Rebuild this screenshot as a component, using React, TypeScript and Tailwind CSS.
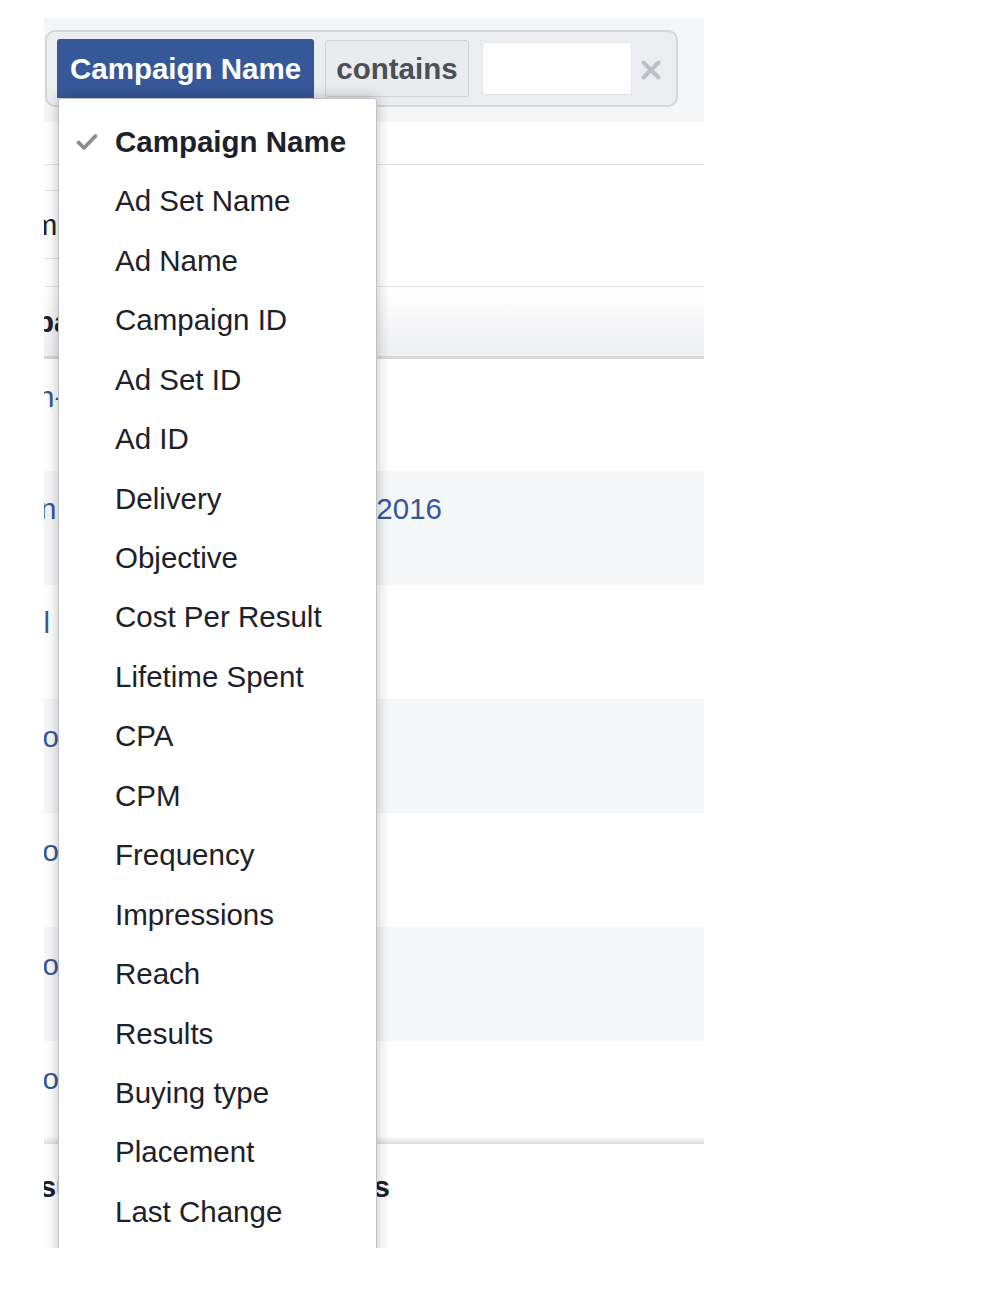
import React from "react";

const fields = [
  "Campaign Name",
  "Ad Set Name",
  "Ad Name",
  "Campaign ID",
  "Ad Set ID",
  "Ad ID",
  "Delivery",
  "Objective",
  "Cost Per Result",
  "Lifetime Spent",
  "CPA",
  "CPM",
  "Frequency",
  "Impressions",
  "Reach",
  "Results",
  "Buying type",
  "Placement",
  "Last Change",
];

// rows of the table behind the menu; only a sliver of each is visible
const rows = [
  { h: "h-[112px]", bg: "bg-white", left: "Campaign-1", shift: "ml-[-124px]", right: "" },
  { h: "h-[114px]", bg: "bg-[#f6f7f9]", left: "Campaign", shift: "ml-[-122px]", right: "May 1, 2016" },
  { h: "h-[114px]", bg: "bg-white", left: "Carl", shift: "ml-[-48px]", right: "" },
  { h: "h-[114px]", bg: "bg-[#f6f7f9]", left: "Promo", shift: "ml-[-72px]", right: "" },
  { h: "h-[114px]", bg: "bg-white", left: "Promo", shift: "ml-[-72px]", right: "" },
  { h: "h-[114px]", bg: "bg-[#f6f7f9]", left: "Promo", shift: "ml-[-72px]", right: "" },
  { h: "h-[95px]", bg: "bg-white", left: "Promo", shift: "ml-[-72px]", right: "" },
];

function Check() {
  return (
    <svg width="22" height="18" viewBox="0 0 22 18" className="ml-[17px]">
      <path d="M2.5 9.5 L8 15 L19.5 3" fill="none" stroke="#8a8d91" strokeWidth="3.8" strokeLinecap="round" strokeLinejoin="round" />
    </svg>
  );
}

export default function App() {
  return (
    <div className="w-[986px] min-h-[1292px] bg-white pt-[18px] pl-[44px] font-['Liberation_Sans',Arial,sans-serif]">
      <div className="relative w-[660px] h-[1230px] overflow-hidden bg-white">
        {/* filter bar */}
        <div className="h-[104px] bg-[#f5f6f7] pt-[12px] pl-[1px]">
          <div className="flex items-start w-[633px] h-[77px] rounded-[10px] border-2 border-[#d3d6db] bg-[#ebedf0] pl-[10px]">
            <div className="mt-[7px] h-[59px] w-[257px] pl-[13px] flex items-center rounded-t-[3px] bg-[#365899] text-white font-bold text-[29.5px] leading-none whitespace-nowrap">
              Campaign Name
            </div>
            <div className="mt-[8px] ml-[11px] h-[57px] w-[144px] flex items-center justify-center rounded-[3px] border border-[#cfd2d7] bg-[#e9ebee] text-[#4b4f56] font-bold text-[29.5px] leading-none">
              contains
            </div>
            <div className="mt-[10px] ml-[13px] h-[53px] w-[150px] bg-white border border-[#e4e6ea]" />
            <svg width="22" height="22" viewBox="0 0 22 22" className="mt-[27px] ml-[8px]">
              <path d="M3.5 3.5 L18.5 18.5 M18.5 3.5 L3.5 18.5" stroke="#bcc0c6" strokeWidth="4" strokeLinecap="round" />
            </svg>
          </div>
        </div>

        {/* table behind */}
        <div className="h-[43px] border-b border-[#dddfe2]" />
        <div className="flex h-[122px] border-b border-[#dddfe2]">
          <div className="w-[250px] flex flex-col">
            <div className="h-[26px] border-b border-[#dddfe2]" />
            <div className="h-[68px] border-b border-[#dddfe2] flex items-center overflow-hidden whitespace-nowrap">
              <span className="ml-[-49px] text-[29.5px] leading-none text-[#1d2129]">Campaign</span>
            </div>
          </div>
        </div>
        <div className="h-[72px] border-b-[3px] border-[#d6d8dc] bg-linear-to-b from-white to-[#eeeff1] flex items-center overflow-hidden whitespace-nowrap">
          <span className="ml-[-72px] text-[29.5px] leading-none font-bold text-[#1d2129]">Campaign</span>
        </div>
        {rows.map((r, i) => (
          <div key={i} className={`${r.h} ${r.bg} flex items-start pt-[21px] text-[29.5px] leading-[34px] text-[#365899] whitespace-nowrap`}>
            <div className="w-[200px] overflow-hidden">
              <span className={`inline-block ${r.shift}`}>{r.left}</span>
            </div>
            <div className="w-[198px] text-right overflow-hidden">{r.right}</div>
          </div>
        ))}
        <div className="h-[8px] bg-linear-to-b from-white to-[#e2e3e6] border-b border-[#dcdee2]" />
        <div className="flex items-start pt-[26px] text-[29.5px] leading-[34px] font-bold text-[#1d2129] whitespace-nowrap">
          <div className="w-[200px] overflow-hidden">
            <span className="inline-block ml-[-42px]">Results</span>
          </div>
          <div className="w-[146px] text-right overflow-hidden">Results</div>
        </div>

        {/* field menu */}
        <div className="absolute left-[14px] top-[80px] w-[319px] h-[1200px] bg-white border border-[#bfc1c5] rounded-t-[3px] shadow-[0_0_14px_rgba(0,0,0,0.25)] pt-[13px]">
          {fields.map((f, i) => (
            <div key={f} className="h-[59.45px] flex items-center">
              <span className="w-[56px] flex items-center">{i === 0 && <Check />}</span>
              <span className={`text-[29.5px] leading-none text-[#1d2129] whitespace-nowrap ${i === 0 ? "font-bold" : ""}`}>{f}</span>
            </div>
          ))}
        </div>
      </div>
    </div>
  );
}
